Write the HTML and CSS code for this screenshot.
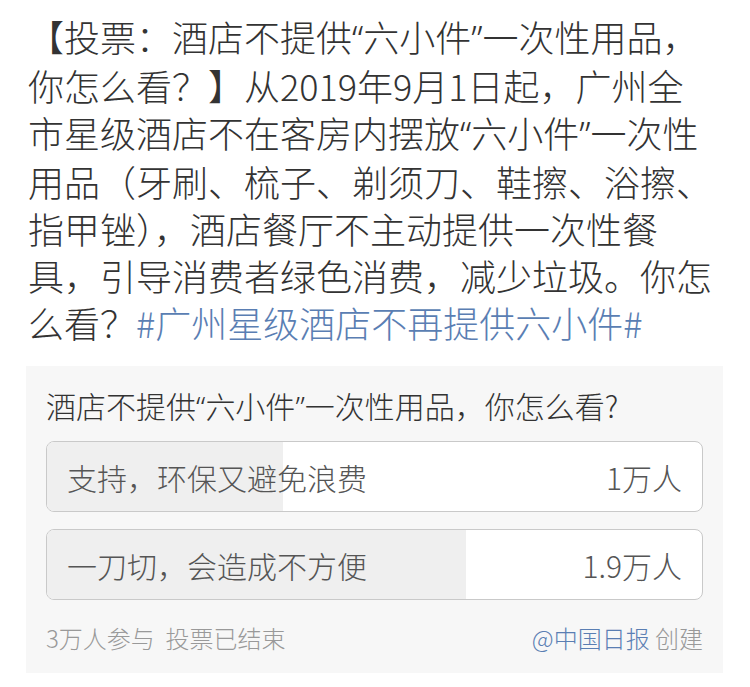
FILE: index.html
```html
<!DOCTYPE html>
<html lang="zh-CN">
<head>
<meta charset="utf-8">
<link rel="stylesheet" href="styles.css">
</head>
<body>
<div class="post">
<p class="text">【投票：酒店不提供<span class="q">“</span>六小件<span class="q">”</span>一次性用品，<br>你怎么看？】从2019年9月1日起，广州全<br>市星级酒店不在客房内摆放<span class="q">“</span>六小件<span class="q">”</span>一次性<br>用品（牙刷、梳子、剃须刀、鞋擦、浴擦、<br>指甲锉），酒店餐厅不主动提供一次性餐<br>具，引导消费者绿色消费，减少垃圾。你怎<br>么看？<a class="tag">#广州星级酒店不再提供六小件#</a></p>
<div class="poll">
<div class="poll-title">酒店不提供<span class="q">“</span>六小件<span class="q">”</span>一次性用品，你怎么看?</div>
<div class="option">
<div class="fill" style="width:36%"></div>
<span class="opt-label">支持，环保又避免浪费</span>
<span class="opt-count">1万人</span>
</div>
<div class="option">
<div class="fill" style="width:64%"></div>
<span class="opt-label">一刀切，会造成不方便</span>
<span class="opt-count">1.9万人</span>
</div>
<div class="poll-foot">
<span class="meta">3万人参与&nbsp; 投票已结束</span>
<span class="creator"><a class="author">@中国日报</a> 创建</span>
</div>
</div>
</div>
</body>
</html>
```
FILE: styles.css
```css
html, body {
  margin: 0;
  padding: 0;
  background: #fff;
}
body {
  font-family: "Noto Sans CJK SC", "Noto Sans", sans-serif;
  font-weight: 300;
  color: #333;
}
.post {
  padding-top: 13px;
}
.text {
  margin: 0;
  padding-left: 28px;
  font-size: 36px;
  line-height: 47px;
  white-space: nowrap;
  color: #333;
}
.q {
  font-family: "Noto Sans", "Liberation Sans", sans-serif;
}
.tag {
  color: #5a7eb3;
  text-decoration: none;
}
.poll {
  margin: 20px 27px 0 26px;
  background: #f7f7f7;
  padding: 20px 20px 20px 20px;
}
.poll-title {
  font-size: 30px;
  line-height: 38px;
  color: #333;
  margin-bottom: 15px;
}
.option {
  position: relative;
  height: 69px;
  border: 1px solid #c9c9c9;
  border-radius: 8px;
  background: #fff;
  overflow: hidden;
  display: flex;
  align-items: center;
  justify-content: space-between;
  padding: 0 20px;
  margin-bottom: 17px;
}
.option + .option {
  margin-bottom: 0;
}
.fill {
  position: absolute;
  left: 0;
  top: 0;
  bottom: 0;
  background: #efefef;
}
.opt-label, .opt-count {
  position: relative;
  font-size: 30px;
  color: #555;
}
.poll-foot {
  margin-top: 23px;
  display: flex;
  justify-content: space-between;
  font-size: 24px;
  line-height: 30px;
  color: #999;
}
.author {
  color: #5a7eb3;
}
```
